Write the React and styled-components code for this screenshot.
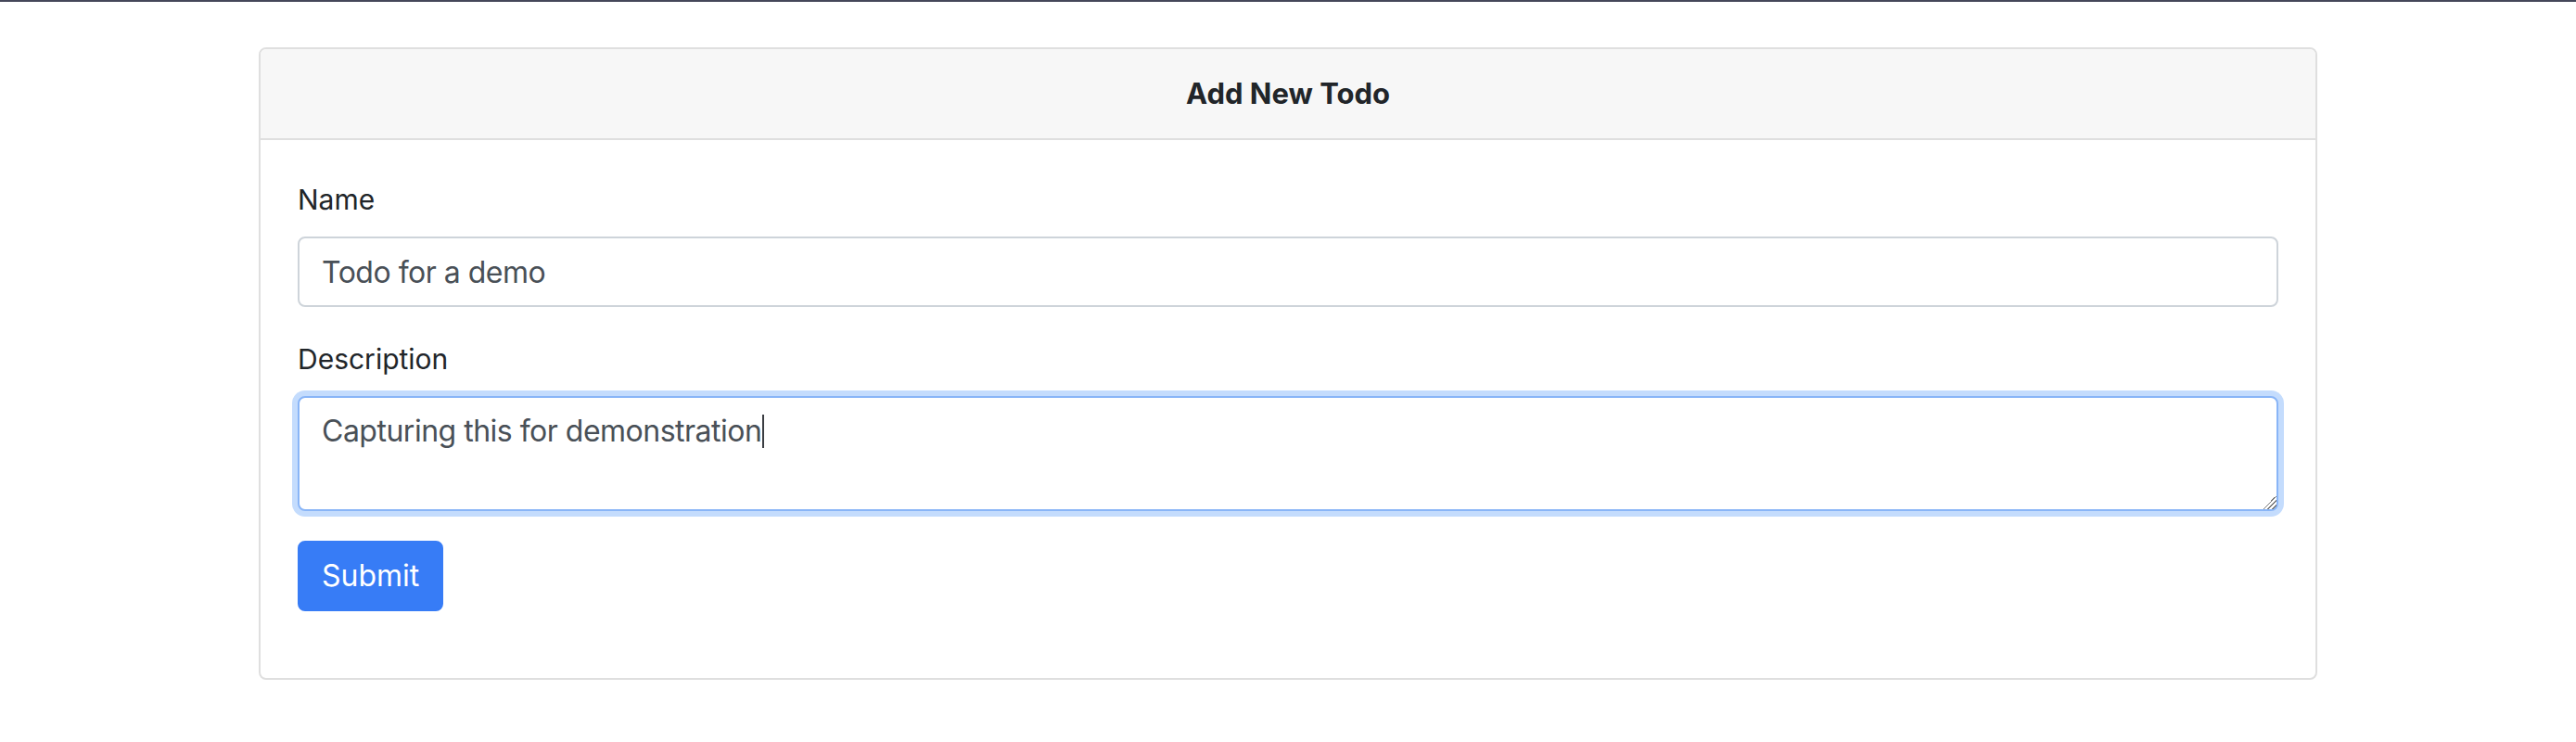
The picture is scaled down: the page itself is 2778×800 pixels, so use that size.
import React from "react";
import styled, { createGlobalStyle } from "styled-components";

const GlobalStyle = createGlobalStyle`
  html, body {
    margin: 0;
    padding: 0;
    background: #ffffff;
  }
  body {
    font-family: Inter, "Noto Sans", Roboto, sans-serif;
    color: #212529;
  }
  * { box-sizing: border-box; }
`;

const TopLine = styled.div`
  height: 2px;
  background: #45475a;
`;

const Container = styled.div`
  max-width: 2280px;
  margin: 0 auto;
  padding: 49px 30px 0;
`;

const Card = styled.section`
  border: 2px solid #dfdfdf;
  border-radius: 8px;
  overflow: hidden;
  background: #ffffff;
`;

const CardHeader = styled.header`
  padding: 24px 40px;
  background: #f7f7f7;
  border-bottom: 2px solid #dfdfdf;
  text-align: center;
  font-size: 31px;
  line-height: 48px;
  font-weight: 700;
  color: #212529;
`;

const CardBody = styled.div`
  padding: 40px;
`;

const Form = styled.form`
  margin-bottom: 32px;
`;

const FormGroup = styled.div`
  margin-bottom: 32px;
`;

const Label = styled.label`
  display: block;
  margin-bottom: 16px;
  font-size: 30px;
  line-height: 48px;
  color: #212529;
`;

const fieldText = `
  font-family: inherit;
  font-size: 32px;
  line-height: 48px;
  letter-spacing: -0.5px;
`;

const Input = styled.input`
  display: block;
  width: 100%;
  height: 76px;
  padding: 12px 24px;
  ${fieldText}
  color: #495057;
  background: #ffffff;
  border: 2px solid #ced4da;
  border-radius: 8px;
  outline: none;
`;

const AreaWrap = styled.div`
  position: relative;
`;

const TextArea = styled.textarea`
  display: block;
  width: 100%;
  height: 124px;
  padding: 12px 24px;
  ${fieldText}
  color: #495057;
  background: #ffffff;
  border: 2px solid ${(p) => (p.$focused ? "#89b5f7" : "#ced4da")};
  border-radius: 8px;
  box-shadow: ${(p) => (p.$focused ? "0 0 0 6px #c4dcfd" : "none")};
  outline: none;
  resize: vertical;
  overflow: auto;

  &::-webkit-resizer {
    width: 24px;
    height: 24px;
    background: linear-gradient(
      135deg,
      transparent 0 50%,
      #7a7a7a 50% 56%,
      transparent 56% 66%,
      #7a7a7a 66% 72%,
      transparent 72% 82%,
      #7a7a7a 82% 88%,
      transparent 88%
    );
  }
`;

const CaretLayer = styled.div`
  position: absolute;
  top: 2px;
  left: 2px;
  padding: 12px 24px;
  ${fieldText}
  color: transparent;
  pointer-events: none;
  white-space: pre;
`;

const Caret = styled.span`
  display: inline-block;
  width: 2px;
  height: 36px;
  margin-left: 1px;
  vertical-align: -7px;
  background: #3a3d42;
`;

const Button = styled.button`
  display: inline-block;
  padding: 12px 24px;
  font-family: inherit;
  font-size: 32px;
  line-height: 48px;
  font-weight: 400;
  color: #ffffff;
  background: #377cf6;
  border: 2px solid #377cf6;
  border-radius: 8px;
  cursor: pointer;
`;

export default function App() {
  const description = "Capturing this for demonstration";
  return (
    <>
      <GlobalStyle />
      <TopLine />
      <Container>
        <Card>
          <CardHeader>Add New Todo</CardHeader>
          <CardBody>
            <Form onSubmit={(e) => e.preventDefault()}>
              <FormGroup>
                <Label htmlFor="name">Name</Label>
                <Input id="name" type="text" defaultValue="Todo for a demo" />
              </FormGroup>
              <FormGroup>
                <Label htmlFor="description">Description</Label>
                <AreaWrap>
                  <TextArea
                    id="description"
                    rows={2}
                    $focused
                    defaultValue={description}
                  />
                  <CaretLayer aria-hidden="true">
                    {description}
                    <Caret />
                  </CaretLayer>
                </AreaWrap>
              </FormGroup>
              <Button type="submit">Submit</Button>
            </Form>
          </CardBody>
        </Card>
      </Container>
    </>
  );
}
